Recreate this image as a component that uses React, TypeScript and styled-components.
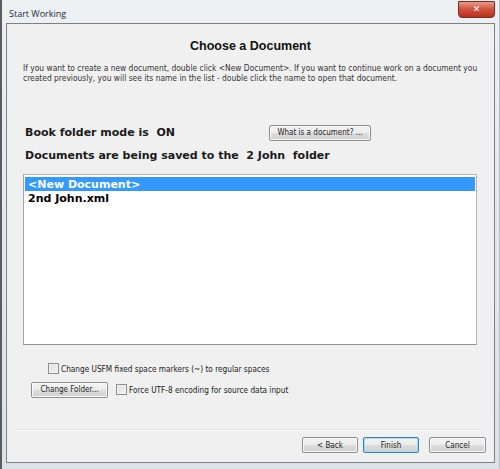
import styled, { createGlobalStyle } from 'styled-components'

const GlobalStyle = createGlobalStyle`
  html, body {
    margin: 0;
    padding: 0;
    background: #ffffff;
  }
`

const Frame = styled.div`
  width: 500px;
  height: 469px;
  box-sizing: border-box;
  display: flex;
  flex-direction: column;
  background: linear-gradient(180deg, #eef1f4 0%, #e6eaee 40%, #dde2e7 100%);
  border-left: 2px solid #5a5d60;
  border-right: 1px solid #b8bcc0;
  padding: 0 4px 6px 4px;
  font-family: 'DejaVu Sans', Verdana, sans-serif;
`

const TitleBar = styled.div`
  height: 23px;
  display: flex;
  align-items: center;
  justify-content: space-between;
  padding-left: 3px;
`

const TitleText = styled.span`
  font-family: 'Open Sans', 'Noto Sans', sans-serif;
  font-size: 9px;
  color: #1e2a3a;
  margin-top: 3px;
`

const CloseButton = styled.div`
  width: 35px;
  height: 15px;
  margin-top: -5px;
  border-radius: 0 0 4px 4px;
  background: linear-gradient(180deg, #e89a8c 0%, #d0503c 50%, #b8301e 100%);
  border: 1px solid #7a2a20;
  display: flex;
  align-items: center;
  justify-content: center;
  color: #ffffff;
  font-family: 'DejaVu Sans', sans-serif;
  font-weight: bold;
  font-size: 9px;
  line-height: 1;
`

const Client = styled.div`
  flex: 1;
  display: flex;
  flex-direction: column;
  background: #f0f0f0;
  border: 1px solid #7d8186;
  box-sizing: border-box;
`

const Heading = styled.h1`
  margin: 15px 0 0 0;
  text-align: center;
  font-family: 'Liberation Sans', Arial, sans-serif;
  font-size: 12.5px;
  font-weight: bold;
  color: #111111;
  line-height: 15px;
`

const Description = styled.p`
  margin: 9px 0 0 16px;
  width: 456px;
  font-family: 'DejaVu Sans Condensed', 'DejaVu Sans', sans-serif;
  font-size: 8.4px;
  line-height: 10px;
  color: #333333;
`

const InfoRow = styled.div`
  display: flex;
  align-items: center;
  margin: 41px 0 0 18px;
  height: 17px;
`

const BoldLabel = styled.span<{ $width?: number }>`
  font-family: 'DejaVu Sans', Verdana, sans-serif;
  font-weight: bold;
  font-size: 11px;
  color: #1a1a1a;
  white-space: pre;
  width: ${({ $width }) => ($width ? `${$width}px` : 'auto')};
`

const SavedRow = styled.div`
  margin: 7px 0 0 18px;
  height: 15px;
  display: flex;
  align-items: center;
`

const SmallButton = styled.div<{ $width: number; $focused?: boolean; $gap?: number }>`
  width: ${({ $width }) => $width}px;
  height: 16px;
  margin-left: ${({ $gap }) => $gap ?? 0}px;
  box-sizing: border-box;
  display: flex;
  align-items: center;
  justify-content: center;
  border: 1px solid ${({ $focused }) => ($focused ? '#3c7fb1' : '#8d8d8d')};
  border-radius: 2px;
  background: linear-gradient(180deg, #f4f4f4 0%, #ebebeb 48%, #dddddd 52%, #cfcfcf 100%);
  box-shadow: ${({ $focused }) => ($focused ? 'inset 0 0 0 1px #a6dcf5' : 'inset 0 0 0 1px #fbfbfb')};
  font-family: 'DejaVu Sans Condensed', 'DejaVu Sans', sans-serif;
  font-size: 8px;
  color: #222222;
`

const ListBox = styled.div`
  margin: 11px 17px 0 16px;
  height: 171px;
  box-sizing: border-box;
  background: #ffffff;
  border: 1px solid #b4b8bd;
  border-bottom-color: #8e939a;
  border-left-color: #a0a5ab;
  padding: 2px 1px;
  display: flex;
  flex-direction: column;
`

const ListItem = styled.div<{ $selected?: boolean }>`
  height: 14px;
  padding-left: 3px;
  display: flex;
  align-items: center;
  font-family: 'DejaVu Sans', Verdana, sans-serif;
  font-weight: bold;
  font-size: 11px;
  color: ${({ $selected }) => ($selected ? '#ffffff' : '#000000')};
  background: ${({ $selected }) => ($selected ? '#3399ff' : 'transparent')};
`

const OptionRow = styled.div<{ $indent: number; $top: number }>`
  display: flex;
  align-items: center;
  gap: 8px;
  margin: ${({ $top }) => $top}px 0 0 ${({ $indent }) => $indent}px;
  height: 17px;
`

const CheckLabel = styled.label`
  display: flex;
  align-items: center;
  gap: 2px;
  font-family: 'DejaVu Sans Condensed', 'DejaVu Sans', sans-serif;
  font-size: 8.2px;
  color: #222222;
`

const CheckBox = styled.span`
  width: 9px;
  height: 9px;
  border: 1px solid #8f8f8f;
  background: linear-gradient(135deg, #dcdcdc 0%, #f6f6f6 100%);
  box-shadow: inset 0 0 0 1px #f4f4f4;
`

const Separator = styled.div`
  margin: 31px 14px 0 8px;
  height: 1px;
  background: #fcfcfc;
  border-top: 1px solid #e2e2e2;
`

const Footer = styled.div`
  display: flex;
  justify-content: flex-end;
  gap: 5px;
  margin: 6px 8px 0 0;
`

function Option({ label }: { label: string }) {
  return (
    <CheckLabel>
      <CheckBox />
      {label}
    </CheckLabel>
  )
}

export default function App() {
  return (
    <>
      <GlobalStyle />
      <Frame>
        <TitleBar>
          <TitleText>Start Working</TitleText>
          <CloseButton>✕</CloseButton>
        </TitleBar>
        <Client>
          <Heading>Choose a Document</Heading>
          <Description>
            If you want to create a new document, double click &lt;New Document&gt;. If you want to continue work on a document you
            created previously, you will see its name in the list - double click the name to open that document.
          </Description>
          <InfoRow>
            <BoldLabel $width={244}>Book folder mode is  ON</BoldLabel>
            <SmallButton $width={102}>What is a document? ...</SmallButton>
          </InfoRow>
          <SavedRow>
            <BoldLabel>Documents are being saved to the  2 John  folder</BoldLabel>
          </SavedRow>
          <ListBox>
            <ListItem $selected>&lt;New Document&gt;</ListItem>
            <ListItem>2nd John.xml</ListItem>
          </ListBox>
          <OptionRow $indent={41} $top={15}>
            <Option label="Change USFM fixed space markers (~) to regular spaces" />
          </OptionRow>
          <OptionRow $indent={24} $top={4}>
            <SmallButton $width={77}>Change Folder...</SmallButton>
            <Option label="Force UTF-8 encoding for source data input" />
          </OptionRow>
          <Separator />
          <Footer>
            <SmallButton $width={56}>&lt; Back</SmallButton>
            <SmallButton $width={56} $focused>Finish</SmallButton>
            <SmallButton $width={57} $gap={5}>Cancel</SmallButton>
          </Footer>
        </Client>
      </Frame>
    </>
  )
}
